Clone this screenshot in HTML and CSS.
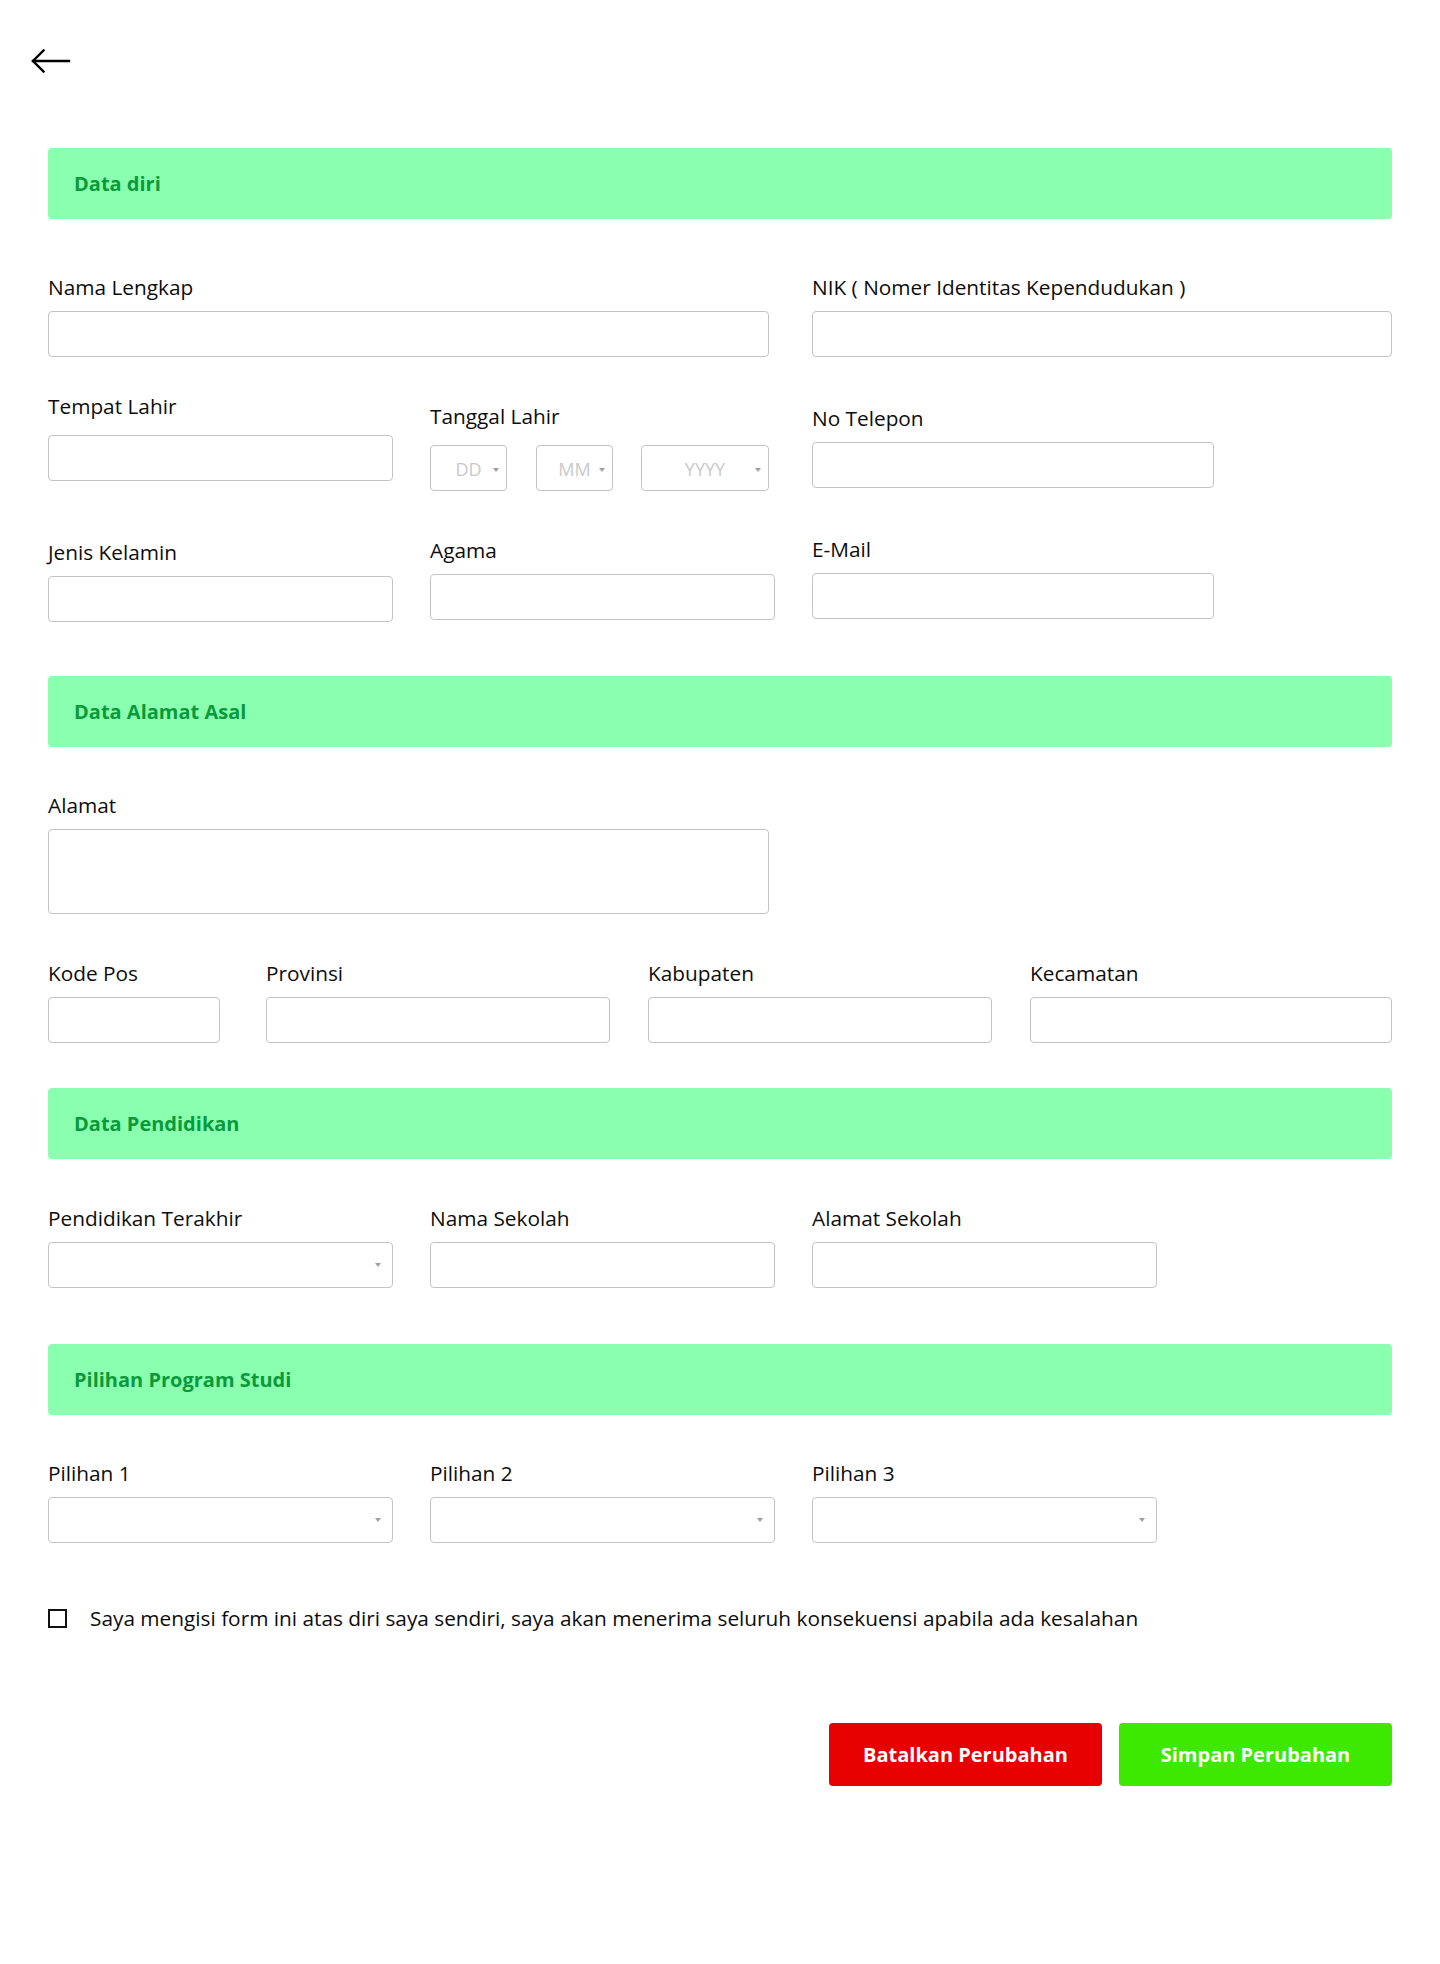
FILE: index.html
```html
<!DOCTYPE html>
<html lang="id">
<head>
<meta charset="utf-8">
<title>Edit Data Pendaftaran</title>
<link rel="stylesheet" href="styles.css">
</head>
<body>
<div class="page">
  <div class="topbar">
    <a class="back" href="#" aria-label="Kembali">
      <svg width="40" height="24" viewBox="0 0 40 24" fill="none" stroke="#000" stroke-width="2.4" stroke-linecap="square" stroke-linejoin="miter">
        <path d="M2 12 H38"/>
        <path d="M12.5 1.5 L2 12 L12.5 22.5"/>
      </svg>
    </a>
  </div>

  <main class="form">
    <div class="section-head">Data diri</div>

    <div class="grid3 row-first">
      <div class="field span2">
        <label class="label">Nama Lengkap</label>
        <input class="input w-full" type="text">
      </div>
      <div class="field">
        <label class="label">NIK ( Nomer Identitas Kependudukan )</label>
        <input class="input w-full" type="text">
      </div>
    </div>

    <div class="grid3 row-gap35">
      <div class="field">
        <label class="label label-tall">Tempat Lahir</label>
        <input class="input w-345" type="text">
      </div>
      <div class="field off10">
        <label class="label label-date">Tanggal Lahir</label>
        <div class="date-group">
          <div class="select select-dd"><span class="ph">DD</span><span class="caret"></span></div>
          <div class="select select-mm"><span class="ph">MM</span><span class="caret"></span></div>
          <div class="select select-yy"><span class="ph">YYYY</span><span class="caret"></span></div>
        </div>
      </div>
      <div class="field off12">
        <label class="label">No Telepon</label>
        <input class="input w-402" type="text">
      </div>
    </div>

    <div class="grid3 row-gap44">
      <div class="field off3">
        <label class="label">Jenis Kelamin</label>
        <input class="input w-345" type="text">
      </div>
      <div class="field off1">
        <label class="label">Agama</label>
        <input class="input w-345" type="text">
      </div>
      <div class="field">
        <label class="label">E-Mail</label>
        <input class="input w-402" type="text">
      </div>
    </div>

    <div class="section-head head-gap54">Data Alamat Asal</div>

    <div class="field row-gap44">
      <label class="label">Alamat</label>
      <textarea class="input textarea"></textarea>
    </div>

    <div class="grid4 row-gap45">
      <div class="field">
        <label class="label">Kode Pos</label>
        <input class="input w-172" type="text">
      </div>
      <div class="field">
        <label class="label">Provinsi</label>
        <input class="input w-344" type="text">
      </div>
      <div class="field">
        <label class="label">Kabupaten</label>
        <input class="input w-344" type="text">
      </div>
      <div class="field">
        <label class="label">Kecamatan</label>
        <input class="input w-full" type="text">
      </div>
    </div>

    <div class="section-head head-gap45">Data Pendidikan</div>

    <div class="grid3 row-gap45">
      <div class="field">
        <label class="label">Pendidikan Terakhir</label>
        <div class="select select-wide w-345"><span class="caret"></span></div>
      </div>
      <div class="field">
        <label class="label">Nama Sekolah</label>
        <input class="input w-345" type="text">
      </div>
      <div class="field">
        <label class="label">Alamat Sekolah</label>
        <input class="input w-345" type="text">
      </div>
    </div>

    <div class="section-head head-gap56">Pilihan Program Studi</div>

    <div class="grid3 row-gap44">
      <div class="field">
        <label class="label">Pilihan 1</label>
        <div class="select select-wide w-345"><span class="caret"></span></div>
      </div>
      <div class="field">
        <label class="label">Pilihan 2</label>
        <div class="select select-wide w-345"><span class="caret"></span></div>
      </div>
      <div class="field">
        <label class="label">Pilihan 3</label>
        <div class="select select-wide w-345"><span class="caret"></span></div>
      </div>
    </div>

    <label class="agree">
      <span class="checkbox"></span>
      <span class="agree-text">Saya mengisi form ini atas diri saya sendiri, saya akan menerima seluruh konsekuensi apabila ada kesalahan</span>
    </label>

    <div class="actions">
      <button class="btn btn-cancel" type="button">Batalkan Perubahan</button>
      <button class="btn btn-save" type="button">Simpan Perubahan</button>
    </div>
  </main>
</div>
</body>
</html>
```

FILE: styles.css
```css
* {
  box-sizing: border-box;
}

html, body {
  margin: 0;
  padding: 0;
  background: #ffffff;
}

body {
  font-family: "Open Sans", "Noto Sans", "Liberation Sans", sans-serif;
  color: #111111;
}

.page {
  width: 1440px;
  min-height: 1964px;
}

.topbar {
  padding: 49px 0 0 31px;
  height: 73px;
}

.back {
  display: block;
  width: 40px;
  height: 24px;
}

.back svg {
  display: block;
}

.form {
  padding: 0 48px;
}

.section-head {
  margin-top: 75px;
  height: 71px;
  background: #8bffb0;
  border-radius: 4px;
  padding: 0 26px;
  display: flex;
  align-items: center;
  font-size: 20px;
  font-weight: 700;
  color: #0a9a3c;
}

.head-gap54 { margin-top: 54px; }
.head-gap45 { margin-top: 45px; }
.head-gap56 { margin-top: 56px; }

.grid3 {
  display: grid;
  grid-template-columns: 382px 382px 1fr;
  align-items: start;
}

.grid4 {
  display: grid;
  grid-template-columns: 218px 382px 382px 1fr;
  align-items: start;
}

.row-first { margin-top: 54px; }
.row-gap35 { margin-top: 35px; }
.row-gap44 { margin-top: 44px; }
.row-gap45 { margin-top: 45px; }

.span2 {
  grid-column: span 2;
}

.field {
  display: flex;
  flex-direction: column;
  align-items: flex-start;
}

.off1 { margin-top: 1px; }
.off3 { margin-top: 3px; }
.off10 { margin-top: 10px; }
.off12 { margin-top: 12px; }

.label {
  display: block;
  font-size: 20.8px;
  font-weight: 500;
  line-height: 29px;
  height: 29px;
  margin-bottom: 9px;
  color: #0d0d0d;
  white-space: nowrap;
}

.label-tall {
  margin-bottom: 14px;
}

.label-date {
  margin-bottom: 14px;
}

.input {
  display: block;
  height: 46px;
  border: 1px solid #c4c4c4;
  border-radius: 4px;
  background: #ffffff;
  font-family: inherit;
  font-size: 18px;
  padding: 0 12px;
  margin: 0;
  outline: none;
}

.w-full { width: 721px; }
.grid3 > .field:not(.span2) .w-full,
.grid4 .w-full { width: 100%; }
.w-345 { width: 345px; }
.w-344 { width: 344px; }
.w-402 { width: 402px; }
.w-172 { width: 172px; }

.span2 .w-full {
  width: 721px;
}

.textarea {
  width: 721px;
  height: 85px;
  resize: none;
  padding: 10px 12px;
}

.date-group {
  display: flex;
  align-items: flex-start;
}

.select {
  position: relative;
  height: 46px;
  border: 1px solid #c4c4c4;
  border-radius: 4px;
  background: #ffffff;
  display: flex;
  align-items: center;
  justify-content: center;
}

.select-dd { width: 77px; }
.select-mm { width: 77px; margin-left: 29px; }
.select-yy { width: 128px; margin-left: 28px; }

.ph {
  font-size: 18px;
  color: #c9c9c9;
  line-height: 24px;
  margin-top: 1px;
}

.caret {
  position: absolute;
  right: 7px;
  top: 22px;
  width: 0;
  height: 0;
  border-left: 3px solid transparent;
  border-right: 3px solid transparent;
  border-top: 4px solid #a89c9c;
}

.select-wide .caret {
  right: 11px;
  top: 20px;
}

.agree {
  margin-top: 62px;
  display: flex;
  align-items: center;
  height: 27px;
  cursor: pointer;
}

.checkbox {
  display: block;
  width: 19px;
  height: 19px;
  border: 2px solid #111111;
  background: #ffffff;
  flex: none;
}

.agree-text {
  margin-left: 23px;
  font-size: 20.8px;
  font-weight: 500;
  line-height: 27px;
  color: #0d0d0d;
  white-space: nowrap;
}

.actions {
  margin-top: 91px;
  display: flex;
  justify-content: flex-end;
  gap: 17px;
}

.btn {
  width: 273px;
  height: 63px;
  border: none;
  border-radius: 4px;
  color: #ffffff;
  font-family: inherit;
  font-size: 20px;
  font-weight: 700;
  cursor: pointer;
}

.btn-cancel {
  background: #e60000;
}

.btn-save {
  background: #3ee900;
}
```
